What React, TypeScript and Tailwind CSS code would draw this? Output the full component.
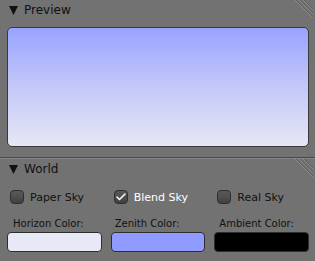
import { Check } from 'lucide-react'

function Hatch() {
  return (
    <svg className="absolute right-[2px] top-0" width="20" height="20" viewBox="0 0 20 20">
      {[2, 6, 10].map((o) => (
        <g key={o}>
          <line x1={o} y1={0} x2={20} y2={20 - o} stroke="#8a8a8a" strokeWidth="1" />
          <line x1={o + 1} y1={0} x2={20} y2={19 - o} stroke="#606060" strokeWidth="1" />
        </g>
      ))}
    </svg>
  )
}

function Header({ title }: { title: string }) {
  return (
    <div className="relative h-[20px] flex items-center pl-[9px]">
      <svg width="9" height="9" viewBox="0 0 9 9">
        <polygon points="0,0 9,0 4.5,9" fill="#111" />
      </svg>
      <span className="ml-[6px] text-[12px] leading-[14px] text-[#111]">{title}</span>
      <Hatch />
    </div>
  )
}

function CheckBox({ label, checked }: { label: string; checked?: boolean }) {
  return (
    <div className="h-[14px] flex items-center pl-[3px]">
      <div className="w-[14px] h-[14px] rounded-[4px] border border-[#2e2e2e] bg-gradient-to-b from-[#5a5a5a] to-[#424242] flex items-center justify-center">
        {checked && <Check size={12} strokeWidth={3} className="text-white" />}
      </div>
      <span className={'ml-[6px] text-[11px] leading-[13px] ' + (checked ? 'text-white' : 'text-[#111]')}>{label}</span>
    </div>
  )
}

export default function App() {
  return (
    <div className="w-[315px] h-[261px] bg-[#727272] overflow-hidden" style={{ fontFamily: '"DejaVu Sans", sans-serif' }}>
      <Header title="Preview" />
      <div className="mt-[7px] ml-[7px] w-[302px] h-[120px] rounded-[5px] border border-[#3a3a3a] bg-gradient-to-b from-[#99a3ff] via-[#c4c8f8] to-[#e6e7f5]" />
      <div className="mt-[10px] border-t border-[#4a4a4a]" />
      <div className="border-t border-[#858585]" />
      <Header title="World" />
      <div className="mt-[11px] ml-[7px] w-[302px] grid grid-cols-3 gap-x-[9px]">
        <CheckBox label="Paper Sky" />
        <CheckBox label="Blend Sky" checked />
        <CheckBox label="Real Sky" />
        <div className="mt-[13px] pl-[6px] text-[10px] leading-[13px] text-[#111]">Horizon Color:</div>
        <div className="mt-[13px] pl-[4px] text-[10px] leading-[13px] text-[#111]">Zenith Color:</div>
        <div className="mt-[13px] pl-[5px] text-[10px] leading-[13px] text-[#111]">Ambient Color:</div>
        <div className="mt-[2px] h-[20px] rounded-[4px] border border-[#2e2e2e] bg-[#e8e9f6]" />
        <div className="mt-[2px] h-[20px] rounded-[4px] border border-[#2e2e2e] bg-[#8f9bff]" />
        <div className="mt-[2px] h-[20px] rounded-[4px] border border-[#2e2e2e] bg-black" />
      </div>
    </div>
  )
}
